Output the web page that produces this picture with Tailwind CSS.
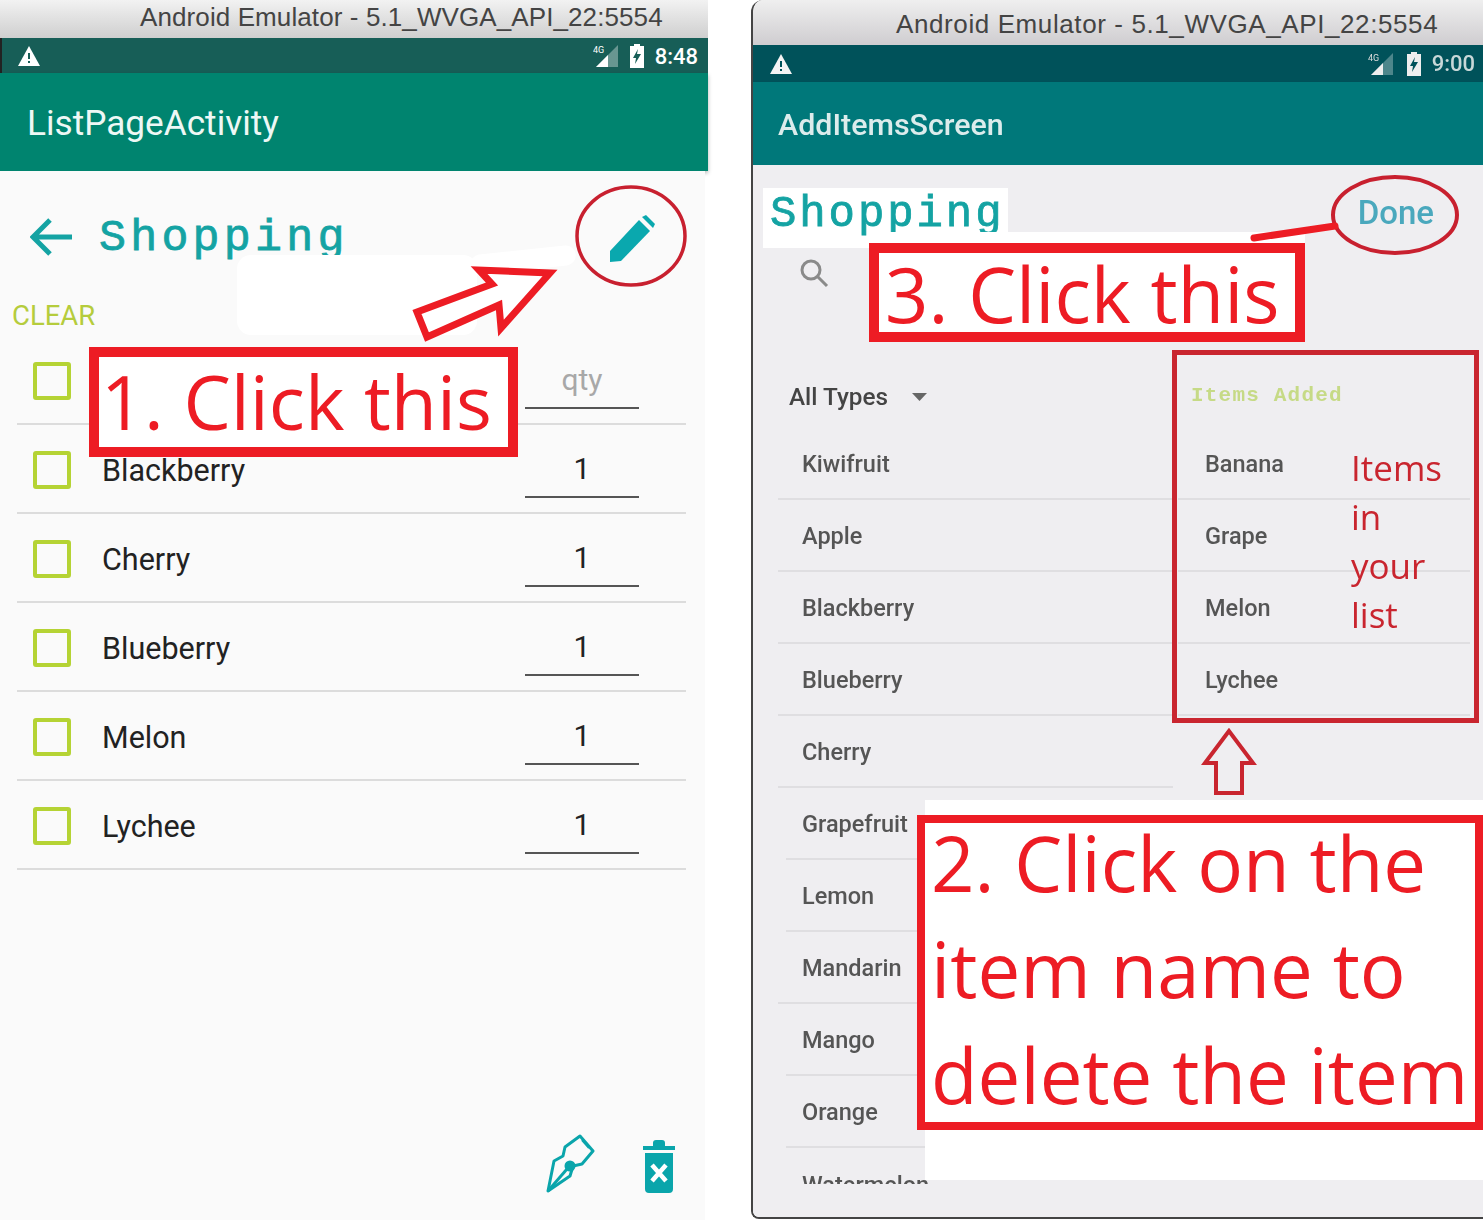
<!DOCTYPE html>
<html lang="en">
<head>
    <meta charset="UTF-8">
    <title>Shopping list help</title>
    <script src="https://cdn.jsdelivr.net/npm/@tailwindcss/browser@4"></script>
</head>
<body class="bg-white font-['Roboto',sans-serif]">
<div class="relative w-[1483px] h-[1220px] overflow-hidden flex">

    <!-- Left screenshot -->
    <section class="w-[708px] h-full flex flex-col shrink-0">
        <div class="h-[38px] bg-gradient-to-b from-[#f2f2f2] to-[#cfcfcf] pl-[140px] pb-[4px] flex items-center text-[#444] text-[26px] tracking-[0.1px] font-['Liberation_Sans',sans-serif] whitespace-nowrap">Android Emulator - 5.1_WVGA_API_22:5554</div>
        <div class="h-[35px] bg-[#175e57] border-l-2 border-[#222] flex items-center pl-[16px] pr-[10px] text-white">
            <svg width="22" height="20" viewBox="0 0 22 20"><path fill="#fff" d="M11 0 22 20H0Z"/><rect x="10" y="7" width="2" height="6" fill="#175e57"/><rect x="10" y="15" width="2" height="2" fill="#175e57"/></svg>
            <svg class="ml-auto" width="26" height="24" viewBox="0 0 26 24"><path fill="#fff" fill-opacity=".35" d="M25 1V23H3Z"/><path fill="#fff" d="M15 11V23H3Z"/><text x="0" y="9" fill="#fff" font-size="9" font-family="Roboto">4G</text></svg>
            <svg class="ml-[10px]" width="16" height="24" viewBox="0 0 16 24"><path fill="#fff" d="M5 0h6v2h4v22H1V2h4z"/><path fill="#175e57" d="M9 5 4 14h3l-1 6 6-10H8z"/></svg>
            <span class="ml-[10px] pt-[2px] text-[22px] font-medium">8:48</span>
        </div>
        <div class="h-[98px] bg-[#00846f] shadow-[0_2px_4px_rgba(0,0,0,0.3)] flex items-center pl-[27px] pt-[3px] text-[#eef8f5] text-[35.200px] w-[708px]">ListPageActivity</div>
        <div class="flex-1 w-[705px] bg-[#fafafa] flex flex-col">
            <div class="h-[131px] flex items-center pl-[30px] pt-[5px]">
                <svg class="mt-[-5px]" width="44" height="40" viewBox="0 0 44 40" fill="none" stroke="#14a3a3" stroke-width="5"><path d="M42 20H4M20 3 3 20 20 37"/></svg>
                <span class="ml-[25px] font-['Liberation_Mono',monospace] text-[45px] tracking-[4.200px] text-[#14a3a3] [-webkit-text-stroke:0.8px_#14a3a3]">Shopping</span>
                <svg class="ml-[261px]" width="46" height="48" viewBox="0 0 46 48"><path fill="#0aa8ae" d="M0 36 29 5 40 16 11 46 0 47Z"/><path fill="#0aa8ae" d="M32 2 36 0 45 9 43 13Z"/></svg>
            </div>
            <div class="h-[34px] pl-[12px] text-[27.500px] leading-[28px] text-[#b5cc3c]">CLEAR</div>

            <div class="ml-[17px] mr-[19px] flex flex-col">
                <div class="h-[89px] border-b-2 border-[#dcdcdc] flex items-center pl-[16px] pt-[2px]">
                    <span class="w-[38px] h-[38px] border-[4px] border-[#b5d334] rounded-[3px]"></span>
                    <span class="ml-auto mr-[47px] w-[114px] h-[47px] mt-[10px] border-b-2 border-[#555] text-center text-[30px] leading-[35px] text-[#a8a8a8]">qty</span>
                </div>
                <div class="h-[89px] border-b-2 border-[#dcdcdc] flex items-center pl-[16px] pt-[2px]">
                    <span class="w-[38px] h-[38px] border-[4px] border-[#b5d334] rounded-[3px]"></span>
                    <span class="ml-[31px] mt-[2px] text-[30.500px] text-[#222]">Blackberry</span>
                    <span class="ml-auto mr-[47px] w-[114px] h-[47px] mt-[10px] border-b-2 border-[#555] text-center text-[30px] leading-[35px] text-[#222]">1</span>
                </div>
                <div class="h-[89px] border-b-2 border-[#dcdcdc] flex items-center pl-[16px] pt-[2px]">
                    <span class="w-[38px] h-[38px] border-[4px] border-[#b5d334] rounded-[3px]"></span>
                    <span class="ml-[31px] mt-[2px] text-[30.500px] text-[#222]">Cherry</span>
                    <span class="ml-auto mr-[47px] w-[114px] h-[47px] mt-[10px] border-b-2 border-[#555] text-center text-[30px] leading-[35px] text-[#222]">1</span>
                </div>
                <div class="h-[89px] border-b-2 border-[#dcdcdc] flex items-center pl-[16px] pt-[2px]">
                    <span class="w-[38px] h-[38px] border-[4px] border-[#b5d334] rounded-[3px]"></span>
                    <span class="ml-[31px] mt-[2px] text-[30.500px] text-[#222]">Blueberry</span>
                    <span class="ml-auto mr-[47px] w-[114px] h-[47px] mt-[10px] border-b-2 border-[#555] text-center text-[30px] leading-[35px] text-[#222]">1</span>
                </div>
                <div class="h-[89px] border-b-2 border-[#dcdcdc] flex items-center pl-[16px] pt-[2px]">
                    <span class="w-[38px] h-[38px] border-[4px] border-[#b5d334] rounded-[3px]"></span>
                    <span class="ml-[31px] mt-[2px] text-[30.500px] text-[#222]">Melon</span>
                    <span class="ml-auto mr-[47px] w-[114px] h-[47px] mt-[10px] border-b-2 border-[#555] text-center text-[30px] leading-[35px] text-[#222]">1</span>
                </div>
                <div class="h-[89px] border-b-2 border-[#dcdcdc] flex items-center pl-[16px] pt-[2px]">
                    <span class="w-[38px] h-[38px] border-[4px] border-[#b5d334] rounded-[3px]"></span>
                    <span class="ml-[31px] mt-[2px] text-[30.500px] text-[#222]">Lychee</span>
                    <span class="ml-auto mr-[47px] w-[114px] h-[47px] mt-[10px] border-b-2 border-[#555] text-center text-[30px] leading-[35px] text-[#222]">1</span>
                </div>
            </div>

            <div class="mt-auto pb-[27px] pr-[30px] flex justify-end items-end gap-[47px]">
                <svg width="50" height="60" viewBox="0 0 50 60" fill="none" stroke="#0aa5ab" stroke-width="3">
                    <path d="M2 58 8 28 17 23 19 14 34 3 47 18 36 31 27 33 24 43Z" stroke-linejoin="round"/>
                    <path d="M36 7 43 15" stroke-width="2"/>
                    <path d="M2 58 21 36" stroke-width="3"/>
                    <circle cx="24" cy="33" r="4" fill="#0aa5ab"/>
                </svg>
                <svg width="32" height="53" viewBox="0 0 32 53">
                    <path fill="#0aa5ab" d="M0 6h10V3q0-3 3-3h6q3 0 3 3v3h10v4H0zM2 13h28v36q0 4-4 4H6q-4 0-4-4z"/>
                    <path stroke="#fff" stroke-width="4.500" d="M9 25 23 41M23 25 9 41"/>
                </svg>
            </div>
        </div>
    </section>

    <!-- Right screenshot -->
    <section class="ml-[43px] w-[732px] h-[1219px] flex flex-col border-l-2 border-b-2 border-[#444] rounded-tl-xl rounded-bl-lg overflow-hidden blur-[0.5px]">
        <div class="h-[45px] bg-gradient-to-b from-[#efefef] to-[#cfcdd0] pl-[143px] pt-[3px] flex items-center text-[#444] text-[26px] tracking-[0.6px] font-['Liberation_Sans',sans-serif] whitespace-nowrap">Android Emulator - 5.1_WVGA_API_22:5554</div>
        <div class="h-[37px] bg-[#00525a] flex items-center pl-[17px] pr-[8px]">
            <svg width="22" height="20" viewBox="0 0 22 20"><path fill="#f4f4f4" d="M11 0 22 20H0Z"/><rect x="10" y="7" width="2" height="6" fill="#00525a"/><rect x="10" y="15" width="2" height="2" fill="#00525a"/></svg>
            <svg class="ml-auto" width="26" height="24" viewBox="0 0 26 24"><path fill="#fff" fill-opacity=".3" d="M25 1V23H3Z"/><path fill="#eee" d="M15 11V23H3Z"/><text x="0" y="9" fill="#ddd" font-size="9" font-family="Roboto">4G</text></svg>
            <svg class="ml-[12px]" width="16" height="24" viewBox="0 0 16 24"><path fill="#eee" d="M5 0h6v2h4v22H1V2h4z"/><path fill="#00525a" d="M9 5 4 14h3l-1 6 6-10H8z"/></svg>
            <span class="ml-[10px] text-[22px] font-medium text-[#c8d8d8]">9:00</span>
        </div>
        <div class="h-[83px] bg-[#00787a] flex items-center pl-[25px] pt-[2px] text-[#dcecec] text-[30.400px] font-medium shadow-[0_2px_3px_rgba(0,0,0,0.2)]">AddItemsScreen</div>

        <div class="flex-1 bg-[#efeef1] flex flex-col">
            <div class="h-[84px] flex items-start pl-[10px]">
                <div class="mt-[23px] h-[60px] w-[245px] bg-white pl-[7px] pt-[2px] font-['Liberation_Mono',monospace] text-[44px] leading-[48px] tracking-[2.900px] text-[#14a3a3] [-webkit-text-stroke:0.8px_#14a3a3]">Shopping</div>
                <span class="ml-auto mr-[49px] mt-[27px] text-[33px] leading-[42px] font-medium text-[#4aa8bd]">Done</span>
            </div>
            <div class="h-[111px] pl-[46px] pt-[9px]">
                <svg width="30" height="30" viewBox="0 0 30 30" fill="none" stroke="#8a8a8a" stroke-width="3"><circle cx="12" cy="12" r="9"/><path d="M18 18 28 28"/></svg>
            </div>

            <div class="flex">
                <div class="w-[395px] ml-[25px] h-[824px] overflow-hidden shrink-0 text-[23.500px] text-[#555] font-medium">
                    <div class="h-[68px] pl-[11px] pt-[6px] flex items-center text-[24.300px] text-[#444]">All Types<svg class="ml-[24px]" width="15" height="8" viewBox="0 0 15 8"><path fill="#666" d="M0 0h15L7.500 8Z"/></svg></div>
                    <div class="h-[72px] pl-[24px] pt-[3px] flex items-center border-b-2 border-[#dfdee1]">Kiwifruit</div>
                    <div class="h-[72px] pl-[24px] pt-[3px] flex items-center border-b-2 border-[#dfdee1]">Apple</div>
                    <div class="h-[72px] pl-[24px] pt-[3px] flex items-center border-b-2 border-[#dfdee1]">Blackberry</div>
                    <div class="h-[72px] pl-[24px] pt-[3px] flex items-center border-b-2 border-[#dfdee1]">Blueberry</div>
                    <div class="h-[72px] pl-[24px] pt-[3px] flex items-center border-b-2 border-[#dfdee1]">Cherry</div>
                    <div class="h-[72px] ml-[8px] pl-[16px] pt-[3px] flex items-center border-b-2 border-[#dfdee1]">Grapefruit</div>
                    <div class="h-[72px] ml-[8px] pl-[16px] pt-[3px] flex items-center border-b-2 border-[#dfdee1]">Lemon</div>
                    <div class="h-[72px] pl-[24px] pt-[3px] flex items-center border-b-2 border-[#dfdee1]">Mandarin</div>
                    <div class="h-[72px] ml-[8px] pl-[16px] pt-[3px] flex items-center border-b-2 border-[#dfdee1]">Mango</div>
                    <div class="h-[72px] ml-[8px] pl-[16px] pt-[3px] flex items-center border-b-2 border-[#dfdee1]">Orange</div>
                    <div class="h-[72px] pl-[24px] pt-[3px] flex items-center">Watermelon</div>
                </div>
                <div class="ml-[5px] w-[292px] text-[23.500px] text-[#555] font-medium">
                    <div class="h-[68px] pl-[13px] pt-[4px] flex items-center font-['Liberation_Mono',monospace] font-bold text-[21px] tracking-[1.200px] text-[#c6da86]">Items Added</div>
                    <div class="h-[72px] pl-[27px] pt-[3px] flex items-center border-b-2 border-[#dfdee1]">Banana</div>
                    <div class="h-[72px] pl-[27px] pt-[3px] flex items-center border-b-2 border-[#dfdee1]">Grape</div>
                    <div class="h-[72px] pl-[27px] pt-[3px] flex items-center border-b-2 border-[#dfdee1]">Melon</div>
                    <div class="h-[72px] pl-[27px] pt-[3px] flex items-center border-b-2 border-[#dfdee1]">Lychee</div>
                </div>
            </div>
        </div>
    </section>

    <!-- Annotations laid over the screenshots -->
    <div class="absolute left-[237px] top-[255px] w-[240px] h-[80px] bg-white rounded-[14px]"></div>
    <div class="absolute left-[470px] top-[250px] w-[106px] h-[20px] bg-white rounded-[10px] -rotate-6"></div>

    <div class="absolute left-[89px] top-[347px] w-[429px] h-[110px] border-[10px] border-[#ed1c24] bg-white flex items-center pl-[2px] font-['Open_Sans',sans-serif] text-[75.300px] leading-none text-[#ed1c24] whitespace-nowrap">1. Click this</div>

    <div class="absolute left-[869px] top-[232px] w-[436px] h-[110px] bg-white"></div>
    <div class="absolute left-[869px] top-[243px] w-[436px] h-[99px] border-[10px] border-[#ed1c24] bg-white flex items-center pl-[6px] pt-[3px] font-['Open_Sans',sans-serif] text-[76px] leading-none text-[#ed1c24] whitespace-nowrap">3. Click this</div>

    <div class="absolute left-[1172px] top-[350px] w-[307px] h-[373px] border-[5px] border-[#c9252f]"></div>
    <div class="absolute left-[1351px] top-[443px] font-['Open_Sans',sans-serif] text-[35px] leading-[49px] text-[#c9252f]">Items<br>in<br>your<br>list</div>

    <div class="absolute left-[925px] top-[800px] w-[558px] h-[380px] bg-white"></div>
    <div class="absolute left-[917px] top-[815px] w-[566px] h-[315px] border-[8px] border-[#ed1c24] bg-white pl-[6px] font-['Open_Sans',sans-serif] text-[76.200px] leading-[106px] text-[#ed1c24] whitespace-nowrap"><div class="mt-[-13px]">2. Click on the<br>item name to<br>delete the item</div></div>

    <svg class="absolute left-0 top-0 pointer-events-none" width="1483" height="1220" viewBox="0 0 1483 1220" fill="none">
        <ellipse cx="631" cy="236" rx="54" ry="49" stroke="#c8202f" stroke-width="3.500"/>
        <path d="M417 312 492 284 479 270 550 273 501 328 499 305 427 337Z" fill="#fff" stroke="#ed1c24" stroke-width="7"/>
        <ellipse cx="1395" cy="215" rx="62" ry="38" stroke="#c8202f" stroke-width="4"/>
        <path d="M1254 238 1335 226" stroke="#ed1c24" stroke-width="7" stroke-linecap="round"/>
        <path d="M1229 731 1205 763H1216V793H1242V763H1253Z" stroke="#c9252f" stroke-width="4"/>
    </svg>
</div>
</body>
</html>
